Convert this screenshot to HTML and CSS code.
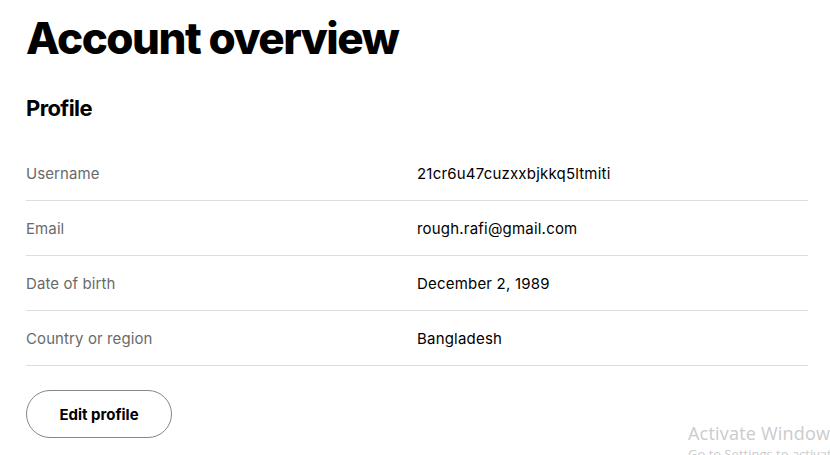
FILE: index.html
```html
<!DOCTYPE html>
<html>
<head>
<meta charset="utf-8">
<link rel="stylesheet" href="styles.css">
</head>
<body>
<main class="page">
  <h1 class="title">Account overview</h1>
  <h2 class="section">Profile</h2>
  <div class="table">
    <div class="row"><span class="label">Username</span><span class="value">21cr6u47cuzxxbjkkq5ltmiti</span></div>
    <div class="row"><span class="label">Email</span><span class="value">rough.rafi@gmail.com</span></div>
    <div class="row"><span class="label">Date of birth</span><span class="value">December 2, 1989</span></div>
    <div class="row"><span class="label">Country or region</span><span class="value">Bangladesh</span></div>
  </div>
  <button class="btn">Edit profile</button>
</main>
<div class="watermark">
  <div class="wm1">Activate Windows</div>
  <div class="wm2">Go to Settings to activate Windows.</div>
</div>
</body>
</html>
```
FILE: styles.css
```css
html, body {
  margin: 0;
  padding: 0;
  background: #fff;
  overflow: hidden;
  height: 455px;
}
body {
  font-family: Inter, "Liberation Sans", sans-serif;
  color: #000;
  position: relative;
}
.page {
  padding: 12px 22px 0 26px;
}
.title {
  margin: 0;
  font-size: 44px;
  font-weight: 800;
  letter-spacing: -1.5px;
  line-height: 52px;
}
.section {
  margin: 30px 0 0;
  font-size: 22px;
  font-weight: 700;
  letter-spacing: -0.6px;
  line-height: 28px;
}
.table {
  margin-top: 24px;
}
.row {
  display: grid;
  grid-template-columns: 391px 1fr;
  align-items: center;
  height: 54px;
  border-bottom: 1px solid #dedede;
}
.label {
  font-size: 15px;
  color: #6a6a6a;
  letter-spacing: 0.1px;
}
.value {
  font-size: 15px;
  color: #000;
  letter-spacing: 0.2px;
}
.btn {
  margin-top: 24px;
  width: 146px;
  height: 48px;
  border: 1px solid #878787;
  border-radius: 24px;
  background: #fff;
  font-family: Inter, "Liberation Sans", sans-serif;
  font-size: 15px;
  font-weight: 700;
  letter-spacing: 0;
  color: #000;
  padding: 0;
}
.watermark {
  position: absolute;
  left: 688px;
  top: 421px;
  font-family: "Open Sans", "Liberation Sans", sans-serif;
  color: #cbcbcb;
  white-space: nowrap;
}
.wm1 {
  font-size: 18px;
  line-height: 24px;
  letter-spacing: 0.2px;
}
.wm2 {
  font-size: 13px;
  line-height: 18px;
}
```
